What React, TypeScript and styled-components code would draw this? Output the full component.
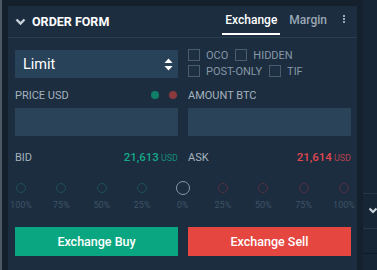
import React, { useState } from "react";
import styled, { createGlobalStyle } from "styled-components";

const GlobalStyle = createGlobalStyle`
  html, body {
    margin: 0;
    padding: 0;
    background: #14212d;
    font-family: Roboto, "Noto Sans", Arial, sans-serif;
    overflow: hidden;
  }
`;

const steps = ["100%", "75%", "50%", "25%", "0%", "25%", "50%", "75%", "100%"];

const App: React.FC = () => {
  const [tab, setTab] = useState<string>("Exchange");

  return (
    <>
      <GlobalStyle />
      <Page>
        <Gutter />
        <Panel>
          <Header>
            <Title>
              <svg width="11" height="8" viewBox="0 0 11 8">
                <path d="M1.5 1.5 L5.5 5.5 L9.5 1.5" stroke="#c9d2da" strokeWidth="2.4" fill="none" />
              </svg>
              ORDER FORM
            </Title>
            <Tabs>
              {["Exchange", "Margin"].map((t) => (
                <Tab key={t} $active={tab === t} onClick={() => setTab(t)}>
                  {t}
                </Tab>
              ))}
            </Tabs>
            <Dots>
              <span />
              <span />
              <span />
            </Dots>
          </Header>

          <Body>
            <Row>
              <Select>
                Limit
                <svg width="9" height="13" viewBox="0 0 9 13">
                  <path d="M4.5 0.5 L8.5 5 L0.5 5 Z" fill="#ffffff" />
                  <path d="M4.5 12.5 L8.5 8 L0.5 8 Z" fill="#ffffff" />
                </svg>
              </Select>
              <Options>
                <OptionLine>
                  <Check>
                    <Box />
                    OCO
                  </Check>
                  <Check>
                    <Box />
                    HIDDEN
                  </Check>
                </OptionLine>
                <OptionLine>
                  <Check>
                    <Box />
                    POST-ONLY
                  </Check>
                  <Check>
                    <Box />
                    TIF
                  </Check>
                </OptionLine>
              </Options>
            </Row>

            <Row>
              <Field>
                <LabelRow>
                  <Label>PRICE USD</Label>
                  <Lights>
                    <Light $color="#0f7f67" />
                    <Light $color="#8a3a3d" />
                  </Lights>
                </LabelRow>
                <Input />
              </Field>
              <Field>
                <LabelRow>
                  <Label>AMOUNT BTC</Label>
                </LabelRow>
                <Input />
              </Field>
            </Row>

            <Row>
              <Quote>
                <Label>BID</Label>
                <Price $color="#16a98a">
                  21,613<Unit>USD</Unit>
                </Price>
              </Quote>
              <Quote>
                <Label>ASK</Label>
                <Price $color="#e0474f">
                  21,614<Unit>USD</Unit>
                </Price>
              </Quote>
            </Row>

            <Slider>
              {steps.map((s, i) => (
                <Step key={i}>
                  <Knob $side={i < 4 ? "buy" : i > 4 ? "sell" : "mid"} />
                  <StepLabel>{s}</StepLabel>
                </Step>
              ))}
            </Slider>

            <Row>
              <Action $color="#0aa682">Exchange Buy</Action>
              <Action $color="#e5463f">Exchange Sell</Action>
            </Row>
          </Body>
        </Panel>
        <Side>
          <SideHeader>
            <svg width="10" height="8" viewBox="0 0 10 8">
              <path d="M1.5 1.5 L5 5 L8.5 1.5" stroke="#c9d2da" strokeWidth="2.2" fill="none" />
            </svg>
          </SideHeader>
          <SideRow />
        </Side>
      </Page>
    </>
  );
};

export default App;

const Page = styled.div`
  display: flex;
  width: 377px;
  height: 270px;
  overflow: hidden;
`;

const Gutter = styled.div`
  width: 6px;
  flex-shrink: 0;
  border-left: 2px solid #4d5863;
  background: #14212d;
`;

const Panel = styled.div`
  width: 349px;
  flex-shrink: 0;
  margin-top: 6px;
  background: #1b2d3f;
  display: flex;
  flex-direction: column;
`;

const Header = styled.div`
  display: flex;
  align-items: center;
  height: 31px;
  border-bottom: 1px solid #2a3e50;
  padding: 0 0 0 7px;
`;

const Title = styled.div`
  display: flex;
  align-items: center;
  gap: 6px;
  font-size: 12.5px;
  font-weight: 700;
  color: #ffffff;
  flex: 1;
`;

const Tabs = styled.div`
  display: flex;
  align-self: stretch;
  gap: 6px;
`;

const Tab = styled.div<{ $active: boolean }>`
  display: flex;
  align-items: center;
  padding: 0 3px;
  font-size: 12px;
  font-weight: 500;
  color: ${(p) => (p.$active ? "#ffffff" : "#9aa8b5")};
  border-bottom: 2px solid ${(p) => (p.$active ? "#ffffff" : "transparent")};
  margin-bottom: 2px;
  cursor: pointer;
`;

const Dots = styled.div`
  display: flex;
  flex-direction: column;
  gap: 1px;
  width: 27px;
  align-items: center;
  margin-bottom: 6px;

  span {
    width: 2px;
    height: 2px;
    background: #9aa8b5;
  }
`;

const Body = styled.div`
  display: flex;
  flex-direction: column;
  padding: 10px 6px 0 7px;
`;

const Row = styled.div`
  display: grid;
  grid-template-columns: 163px 163px;
  column-gap: 10px;
`;

const Select = styled.div`
  height: 28px;
  margin-top: 2px;
  background: #284259;
  display: flex;
  align-items: center;
  justify-content: space-between;
  padding: 0 5px 0 8px;
  font-size: 14.5px;
  color: #ffffff;
`;

const Options = styled.div`
  display: flex;
  flex-direction: column;
  gap: 4px;
  padding-top: 1px;
`;

const OptionLine = styled.div`
  display: flex;
  gap: 7px;
`;

const Check = styled.label`
  display: flex;
  align-items: center;
  gap: 6px;
  font-size: 11px;
  color: #8797a6;
  height: 12px;
`;

const Box = styled.span`
  width: 10px;
  height: 10px;
  border: 1px solid #4a5c6c;
  background: #1d3043;
`;

const Field = styled.div`
  display: flex;
  flex-direction: column;
  margin-top: 10px;
`;

const LabelRow = styled.div`
  display: flex;
  align-items: center;
  justify-content: space-between;
  height: 14px;
  margin-bottom: 6px;
`;

const Label = styled.span`
  font-size: 11px;
  color: #a5b2bd;
`;

const Lights = styled.div`
  display: flex;
  gap: 10px;
  padding-right: 1px;
`;

const Light = styled.span<{ $color: string }>`
  width: 8px;
  height: 8px;
  border-radius: 50%;
  background: ${(p) => p.$color};
`;

const Input = styled.div`
  height: 28px;
  background: #2a4358;
`;

const Quote = styled.div`
  display: flex;
  align-items: center;
  justify-content: space-between;
  margin-top: 14px;
  height: 14px;
`;

const Price = styled.span<{ $color: string }>`
  font-size: 11.5px;
  font-weight: 500;
  color: ${(p) => p.$color};
`;

const Unit = styled.span`
  font-size: 9px;
  font-weight: 400;
  margin-left: 2px;
  opacity: 0.75;
`;

const Slider = styled.div`
  display: flex;
  justify-content: space-between;
  margin: 17px -8px 0 -9px;
`;

const Step = styled.div`
  width: 30px;
  display: flex;
  flex-direction: column;
  align-items: center;
`;

const Knob = styled.span<{ $side: "buy" | "sell" | "mid" }>`
  box-sizing: border-box;
  width: ${(p) => (p.$side === "mid" ? 14 : 10)}px;
  height: ${(p) => (p.$side === "mid" ? 14 : 10)}px;
  margin: ${(p) => (p.$side === "mid" ? 0 : 2)}px 0;
  border-radius: 50%;
  border: 1px solid
    ${(p) => (p.$side === "buy" ? "#1e5053" : p.$side === "sell" ? "#583040" : "#8a98a5")};
`;

const StepLabel = styled.span`
  margin-top: 5px;
  font-size: 9px;
  color: #3f5366;
`;

const Action = styled.button<{ $color: string }>`
  margin-top: 17px;
  height: 29px;
  border: none;
  background: ${(p) => p.$color};
  color: #ffffff;
  font-family: inherit;
  font-size: 12.5px;
  font-weight: 500;
  cursor: pointer;
`;

const Side = styled.div`
  flex: 1;
  margin-left: 6px;
  background: #172636;
  display: flex;
  flex-direction: column;
  padding-top: 193px;
`;

const SideHeader = styled.div`
  height: 34px;
  border-top: 1px solid #24384a;
  border-bottom: 1px solid #24384a;
  display: flex;
  align-items: center;
  padding-left: 5px;
`;

const SideRow = styled.div`
  height: 24px;
  border-bottom: 1px solid #0f1a25;
`;
